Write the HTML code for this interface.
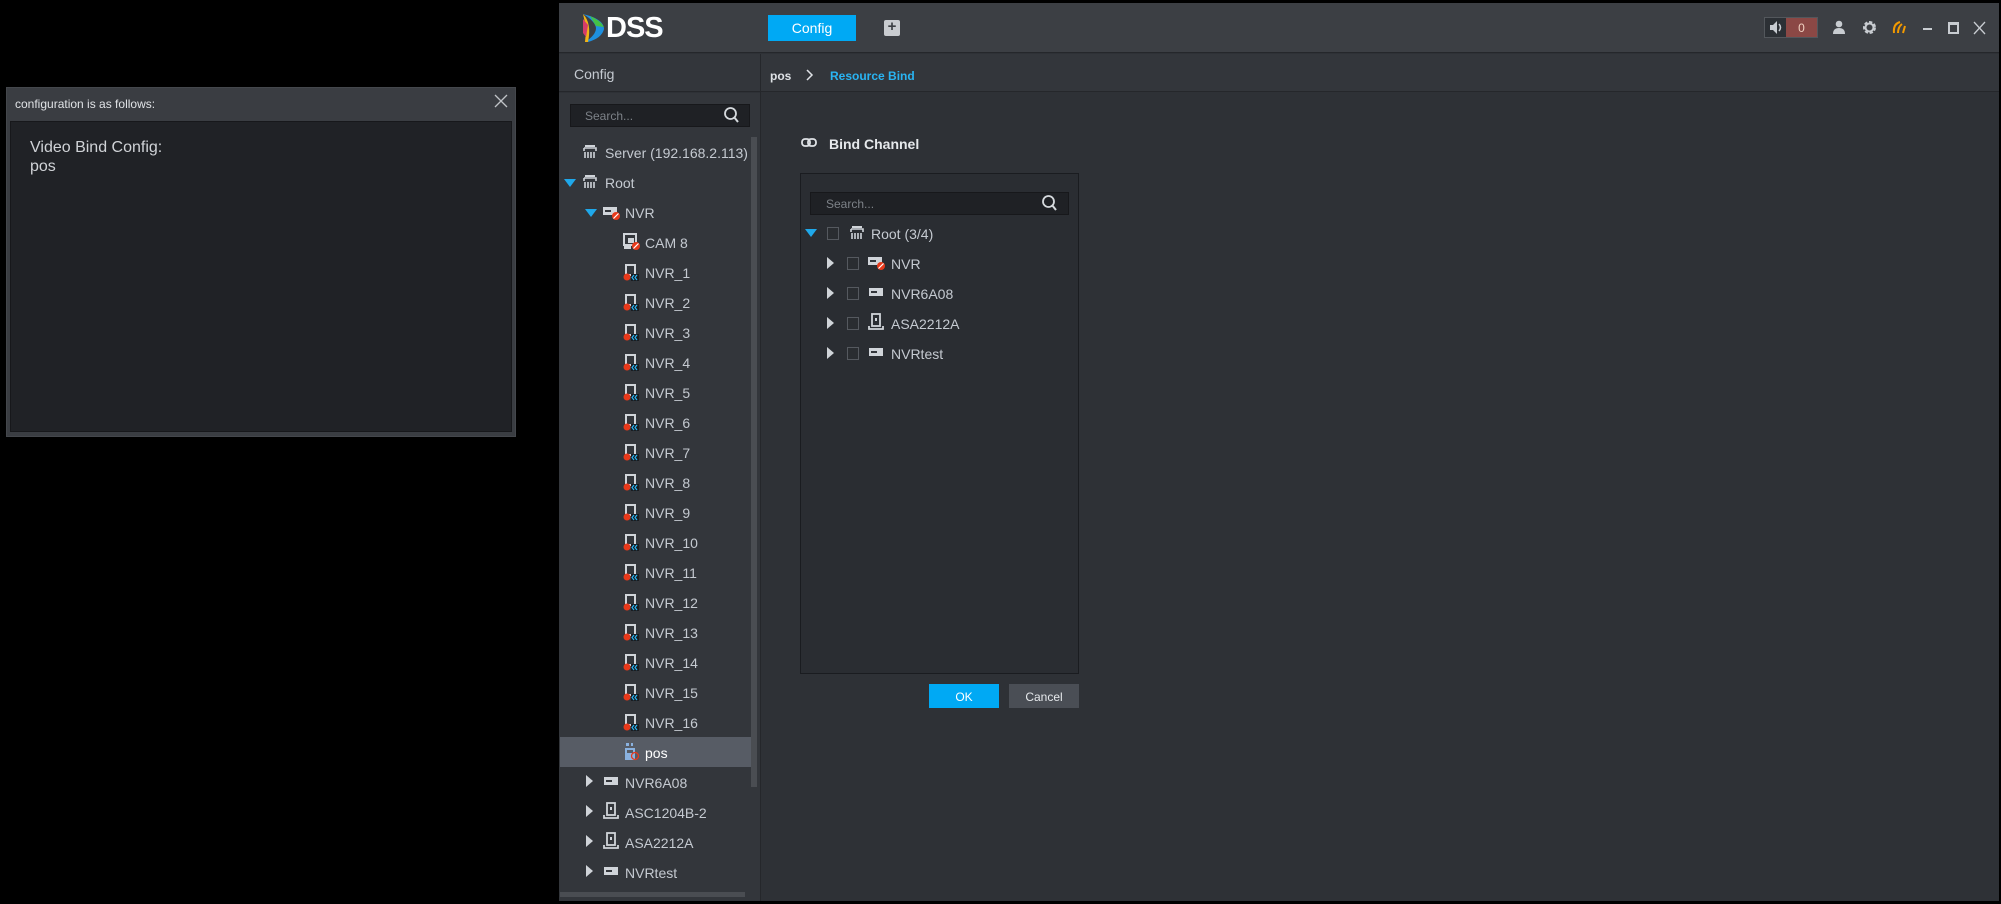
<!DOCTYPE html>
<html><head><meta charset="utf-8"><style>
*{margin:0;padding:0;box-sizing:border-box}
body{width:2001px;height:904px;background:#000;position:relative;overflow:hidden;font-family:"Liberation Sans",sans-serif;color:#c5cad1}
.a{position:absolute}
.t{position:absolute;font-size:14px;line-height:16px;white-space:nowrap;color:#c5cad1}
.tri{position:absolute;width:0;height:0;border-left:6px solid transparent;border-right:6px solid transparent;border-top:8px solid #1fa8ea}
.trr{position:absolute;width:0;height:0;border-top:6px solid transparent;border-bottom:6px solid transparent;border-left:7px solid #d0d4d9}
.cb{position:absolute;width:12px;height:13px;border:1px solid #55595f;background:#2a2d31}
</style></head><body>

<!-- left dialog -->
<div class="a" style="left:6px;top:87px;width:510px;height:350px;background:#3a3d42;border:1px solid #44474c"></div>
<div class="t" style="left:15px;top:96px;font-size:12px;color:#e0e3e6">configuration is as follows:</div>
<svg class="a" style="left:494px;top:94px" width="14" height="14"><path d="M1 1L13 13M13 1L1 13" stroke="#c0c4c8" stroke-width="1.3"/></svg>
<div class="a" style="left:10px;top:121px;width:502px;height:311px;background:#202226;border:1px solid #17181b"></div>
<div class="t" style="left:30px;top:138px;font-size:16px;line-height:19px;color:#d0d3d7">Video Bind Config:</div>
<div class="t" style="left:30px;top:157px;font-size:16px;line-height:19px;color:#d0d3d7">pos</div>

<!-- app -->
<div class="a" style="left:559px;top:3px;width:1440px;height:898px;background:#2e3136"></div>
<div class="a" style="left:559px;top:3px;width:1440px;height:50px;background:#3c3f44;border-bottom:1px solid #25272b"></div>
<!-- logo -->
<svg class="a" style="left:580px;top:13px" width="28" height="30"><path d="M3 1 L10 3 Q24 8 24 16 Q22 25 8 29 L5 29 Q16 22 16 15 Q15 8 3 1Z" fill="#1e90e0"/><path d="M3 1 Q12 10 8 29 L5 29 Q7 15 3 1Z" fill="#f2b316"/><path d="M3 6 L8 12 L6 24 L3 20Z" fill="#d63c6a"/><path d="M10 3 Q20 7 24 14 L16 13Z" fill="#45c046"/></svg>
<div class="t" style="left:606px;top:12px;font-size:29px;line-height:32px;font-weight:bold;color:#fff;letter-spacing:-1px">DSS</div>
<div class="a" style="left:768px;top:15px;width:88px;height:26px;background:#00a9f4"></div>
<div class="t" style="left:768px;top:20px;width:88px;text-align:center;font-size:14px;color:#fff">Config</div>
<div class="a" style="left:884px;top:20px;width:16px;height:16px;background:#c9ccd0;border-radius:2px"></div>
<div class="t" style="left:884px;top:19px;width:16px;text-align:center;font-weight:bold;color:#3c3f44;font-size:15px">+</div>
<!-- top right -->
<div class="a" style="left:1764px;top:17px;width:54px;height:21px;background:#2c3035;border:1px solid #53575c"></div>
<div class="a" style="left:1786px;top:18px;width:31px;height:19px;background:#8b4845"></div>
<div class="t" style="left:1786px;top:20px;width:31px;text-align:center;font-size:12px;color:#f0d0c0">0</div>
<svg class="a" style="left:1768px;top:19px" width="16" height="17"><path d="M2 6h3l4-4v13l-4-4H2z" fill="#c8ccd1"/><path d="M11 5q3 3.5 0 7" stroke="#c8ccd1" fill="none" stroke-width="1.5"/></svg>
<svg class="a" style="left:1832px;top:20px" width="14" height="15"><circle cx="7" cy="4" r="3.3" fill="#c8ccd1"/><path d="M1 14q0-6 6-6t6 6z" fill="#c8ccd1"/></svg>
<svg class="a" style="left:1862px;top:20px" width="15" height="15"><circle cx="7.5" cy="7.5" r="5" fill="none" stroke="#c8ccd1" stroke-width="3" stroke-dasharray="3 1.6"/><circle cx="7.5" cy="7.5" r="4" fill="none" stroke="#c8ccd1" stroke-width="2"/></svg>
<svg class="a" style="left:1892px;top:20px" width="15" height="15"><path d="M2 13q-1-9 6-11M6 13q0-6 4-9M11 13l2-7" stroke="#f39a00" fill="none" stroke-width="2"/></svg>
<div class="a" style="left:1923px;top:28px;width:9px;height:2px;background:#c8ccd1"></div>
<div class="a" style="left:1948px;top:22px;width:11px;height:12px;border:2px solid #c8ccd1;border-top-width:3px"></div>
<svg class="a" style="left:1973px;top:21px" width="13" height="14"><path d="M1 1L12 13M12 1L1 13" stroke="#c8ccd1" stroke-width="1.3"/></svg>

<!-- second bar -->
<div class="a" style="left:559px;top:54px;width:1440px;height:38px;background:#33363b;border-bottom:1px solid #25272b"></div>
<div class="t" style="left:574px;top:66px;font-size:14px;color:#c5cad1">Config</div>
<div class="a" style="left:760px;top:54px;width:1px;height:847px;background:#25272b"></div>
<div class="t" style="left:770px;top:68px;font-size:12px;font-weight:bold;color:#dfe2e6">pos</div>
<svg class="a" style="left:806px;top:69px" width="8" height="12"><path d="M1 1l5 5-5 5" stroke="#dfe2e6" fill="none" stroke-width="1.5"/></svg>
<div class="t" style="left:830px;top:68px;font-size:12px;font-weight:bold;color:#29b4f2">Resource Bind</div>

<!-- sidebar -->
<div class="a" style="left:559px;top:93px;width:201px;height:808px;background:#33363b"></div>
<div class="a" style="left:570px;top:104px;width:180px;height:23px;background:#1f2125;border:1px solid #17181b"></div>
<div class="t" style="left:585px;top:108px;font-size:12px;color:#7d8288">Search...</div>
<svg class="a" style="left:723px;top:106px" width="17" height="18"><circle cx="7.5" cy="7.5" r="5.5" fill="none" stroke="#d5d9dd" stroke-width="1.8"/><path d="M11 11l4 5" stroke="#d5d9dd" stroke-width="2"/></svg>
<div class="a" style="left:751px;top:137px;width:6px;height:650px;background:#4a4d52"></div>
<div class="a" style="left:560px;top:737px;width:191px;height:30px;background:#575c65"></div>
<div class="a" style="left:560px;top:892px;width:185px;height:5px;background:#4a4d52"></div>

<!-- sidebar tree -->
<svg width="0" height="0" style="position:absolute"><defs>
<g id="srv"><path d="M1 4h12v3M1 4v3" stroke="#d0d4d9" fill="none" stroke-width="1.6"/><path d="M2 8v6M5 8v6M8 8v6M11 8v6" stroke="#d0d4d9" stroke-width="1.6"/><rect x="2" y="1" width="10" height="2" fill="#d0d4d9"/></g>
<g id="nvr"><rect x="1" y="4" width="14" height="8" fill="#d0d4d9"/><rect x="3" y="7" width="6" height="2" fill="#33363b"/></g>
<g id="nvrr"><rect x="0" y="3" width="14" height="8" fill="#d0d4d9"/><rect x="2" y="6" width="6" height="2" fill="#33363b"/><circle cx="13" cy="12" r="4" fill="#e8391a"/><path d="M10.5 14.5l5-5" stroke="#fff" stroke-width="1.2"/></g>
<g id="cam"><rect x="1" y="1" width="12" height="11" fill="none" stroke="#d0d4d9" stroke-width="2"/><rect x="5" y="5" width="6" height="5" fill="#d0d4d9"/><rect x="1" y="13" width="7" height="3" fill="#d0d4d9"/><circle cx="13" cy="13" r="4" fill="#e8391a"/><path d="M10.5 15.5l5-5" stroke="#fff" stroke-width="1.2"/></g>
<g id="ch"><rect x="3" y="1" width="9" height="10" fill="none" stroke="#d0d4d9" stroke-width="2"/><circle cx="4" cy="13" r="3.5" fill="#e8391a"/><path d="M8 10h8v7H8z" fill="#1a1c20"/><path d="M11 11l-2 2.5 2 2.5M14 11l-2 2.5 2 2.5" stroke="#29b4f2" fill="none" stroke-width="1.2"/></g>
<g id="acs"><rect x="4" y="1" width="8" height="12" fill="none" stroke="#d0d4d9" stroke-width="1.8"/><rect x="7" y="5" width="2" height="3" fill="#d0d4d9"/><path d="M1 13v3h14v-3" stroke="#d0d4d9" fill="none" stroke-width="1.8"/></g>
<g id="pos"><rect x="3" y="0" width="3" height="3" fill="#8ab2e0"/><rect x="8" y="0" width="2" height="3" fill="#8ab2e0"/><rect x="2" y="5" width="10" height="12" fill="#8ab2e0"/><rect x="4" y="7" width="6" height="3" fill="#575c65"/><circle cx="12" cy="13" r="3.5" fill="none" stroke="#e8391a" stroke-width="1.3"/></g>
</defs></svg>

<svg class="a" style="left:583px;top:144px" width="16" height="16"><use href="#srv"/></svg>
<div class="t" style="left:605px;top:145px">Server (192.168.2.113)</div>
<div class="tri" style="left:564px;top:179px"></div>
<svg class="a" style="left:583px;top:174px" width="16" height="16"><use href="#srv"/></svg>
<div class="t" style="left:605px;top:175px">Root</div>
<div class="tri" style="left:585px;top:209px"></div>
<svg class="a" style="left:603px;top:204px" width="18" height="18"><use href="#nvrr"/></svg>
<div class="t" style="left:625px;top:205px">NVR</div>
<svg class="a" style="left:623px;top:233px" width="18" height="18"><use href="#cam"/></svg>
<div class="t" style="left:645px;top:235px">CAM 8</div>

<svg class="a" style="left:623px;top:264px" width="18" height="18"><use href="#ch"/></svg><div class="t" style="left:645px;top:265px">NVR_1</div>
<svg class="a" style="left:623px;top:294px" width="18" height="18"><use href="#ch"/></svg><div class="t" style="left:645px;top:295px">NVR_2</div>
<svg class="a" style="left:623px;top:324px" width="18" height="18"><use href="#ch"/></svg><div class="t" style="left:645px;top:325px">NVR_3</div>
<svg class="a" style="left:623px;top:354px" width="18" height="18"><use href="#ch"/></svg><div class="t" style="left:645px;top:355px">NVR_4</div>
<svg class="a" style="left:623px;top:384px" width="18" height="18"><use href="#ch"/></svg><div class="t" style="left:645px;top:385px">NVR_5</div>
<svg class="a" style="left:623px;top:414px" width="18" height="18"><use href="#ch"/></svg><div class="t" style="left:645px;top:415px">NVR_6</div>
<svg class="a" style="left:623px;top:444px" width="18" height="18"><use href="#ch"/></svg><div class="t" style="left:645px;top:445px">NVR_7</div>
<svg class="a" style="left:623px;top:474px" width="18" height="18"><use href="#ch"/></svg><div class="t" style="left:645px;top:475px">NVR_8</div>
<svg class="a" style="left:623px;top:504px" width="18" height="18"><use href="#ch"/></svg><div class="t" style="left:645px;top:505px">NVR_9</div>
<svg class="a" style="left:623px;top:534px" width="18" height="18"><use href="#ch"/></svg><div class="t" style="left:645px;top:535px">NVR_10</div>
<svg class="a" style="left:623px;top:564px" width="18" height="18"><use href="#ch"/></svg><div class="t" style="left:645px;top:565px">NVR_11</div>
<svg class="a" style="left:623px;top:594px" width="18" height="18"><use href="#ch"/></svg><div class="t" style="left:645px;top:595px">NVR_12</div>
<svg class="a" style="left:623px;top:624px" width="18" height="18"><use href="#ch"/></svg><div class="t" style="left:645px;top:625px">NVR_13</div>
<svg class="a" style="left:623px;top:654px" width="18" height="18"><use href="#ch"/></svg><div class="t" style="left:645px;top:655px">NVR_14</div>
<svg class="a" style="left:623px;top:684px" width="18" height="18"><use href="#ch"/></svg><div class="t" style="left:645px;top:685px">NVR_15</div>
<svg class="a" style="left:623px;top:714px" width="18" height="18"><use href="#ch"/></svg><div class="t" style="left:645px;top:715px">NVR_16</div>
<svg class="a" style="left:623px;top:743px" width="18" height="18"><use href="#pos"/></svg><div class="t" style="left:645px;top:745px;color:#fff">pos</div>

<div class="trr" style="left:586px;top:775px"></div>
<svg class="a" style="left:603px;top:773px" width="18" height="18"><use href="#nvr"/></svg><div class="t" style="left:625px;top:775px">NVR6A08</div>
<div class="trr" style="left:586px;top:805px"></div>
<svg class="a" style="left:603px;top:802px" width="18" height="18"><use href="#acs"/></svg><div class="t" style="left:625px;top:805px">ASC1204B-2</div>
<div class="trr" style="left:586px;top:835px"></div>
<svg class="a" style="left:603px;top:832px" width="18" height="18"><use href="#acs"/></svg><div class="t" style="left:625px;top:835px">ASA2212A</div>
<div class="trr" style="left:586px;top:865px"></div>
<svg class="a" style="left:603px;top:863px" width="18" height="18"><use href="#nvr"/></svg><div class="t" style="left:625px;top:865px">NVRtest</div>

<!-- main content -->
<svg class="a" style="left:801px;top:136px" width="16" height="14"><rect x="1" y="3" width="8" height="7" rx="3" fill="none" stroke="#dfe2e6" stroke-width="1.8"/><rect x="7" y="3" width="8" height="7" rx="3" fill="none" stroke="#dfe2e6" stroke-width="1.8"/></svg>
<div class="t" style="left:829px;top:136px;font-weight:bold;color:#e6e9ec">Bind Channel</div>
<div class="a" style="left:800px;top:173px;width:279px;height:501px;background:#2a2d32;border:1px solid #1a1c20"></div>
<div class="a" style="left:810px;top:192px;width:259px;height:23px;background:#1f2125;border:1px solid #17181b"></div>
<div class="t" style="left:826px;top:196px;font-size:12px;color:#7d8288">Search...</div>
<svg class="a" style="left:1041px;top:194px" width="17" height="18"><circle cx="7.5" cy="7.5" r="5.5" fill="none" stroke="#d5d9dd" stroke-width="1.8"/><path d="M11 11l4 5" stroke="#d5d9dd" stroke-width="2"/></svg>

<div class="tri" style="left:805px;top:229px"></div>
<div class="cb" style="left:827px;top:227px"></div>
<svg class="a" style="left:850px;top:225px" width="16" height="16"><use href="#srv"/></svg>
<div class="t" style="left:871px;top:226px">Root (3/4)</div>
<div class="trr" style="left:827px;top:257px"></div><div class="cb" style="left:847px;top:257px"></div>
<svg class="a" style="left:868px;top:254px" width="18" height="18"><use href="#nvrr"/></svg><div class="t" style="left:891px;top:256px">NVR</div>
<div class="trr" style="left:827px;top:287px"></div><div class="cb" style="left:847px;top:287px"></div>
<svg class="a" style="left:868px;top:284px" width="18" height="18"><use href="#nvr"/></svg><div class="t" style="left:891px;top:286px">NVR6A08</div>
<div class="trr" style="left:827px;top:317px"></div><div class="cb" style="left:847px;top:317px"></div>
<svg class="a" style="left:868px;top:313px" width="18" height="18"><use href="#acs"/></svg><div class="t" style="left:891px;top:316px">ASA2212A</div>
<div class="trr" style="left:827px;top:347px"></div><div class="cb" style="left:847px;top:347px"></div>
<svg class="a" style="left:868px;top:344px" width="18" height="18"><use href="#nvr"/></svg><div class="t" style="left:891px;top:346px">NVRtest</div>

<div class="a" style="left:929px;top:684px;width:70px;height:24px;background:#00a9f4"></div>
<div class="t" style="left:929px;top:689px;width:70px;text-align:center;font-size:12px;color:#fff">OK</div>
<div class="a" style="left:1009px;top:684px;width:70px;height:24px;background:#4a4e55"></div>
<div class="t" style="left:1009px;top:689px;width:70px;text-align:center;font-size:12px;color:#e6e9ec">Cancel</div>
</body></html>
